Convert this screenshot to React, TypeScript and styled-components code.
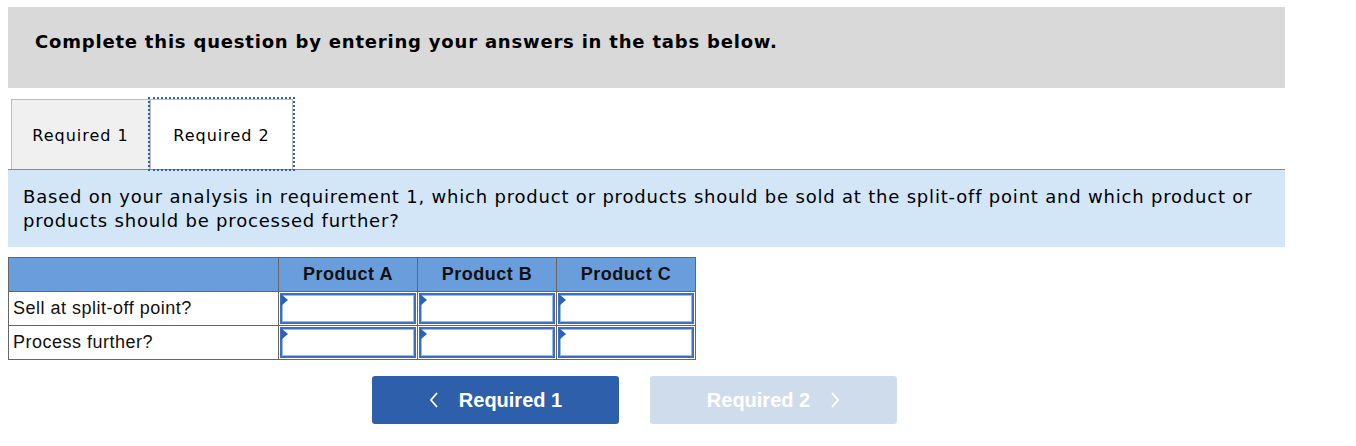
import React from 'react';
import styled, { createGlobalStyle } from 'styled-components';

const GlobalStyle = createGlobalStyle`
	html, body {
		margin: 0;
		padding: 0;
		background: #fff;
	}
	body {
		font-family: "DejaVu Sans", Verdana, sans-serif;
		color: #000;
	}
`;

const Page = styled.div`
	width: 1277px;
	padding: 7px 0 0 8px;
`;

const Instructions = styled.div`
	background: #d9d9d9;
	height: 81px;
	padding: 24px 0 0 27px;
	box-sizing: border-box;
	font-weight: bold;
	font-size: 18px;
	letter-spacing: 0.8px;
`;

const TabBar = styled.div`
	display: flex;
	margin-top: 11px;
	padding-left: 3px;
	border-bottom: 1px solid #8a8a8a;
	height: 70px;
`;

const Tab = styled.div<{ $active?: boolean }>`
	display: flex;
	align-items: center;
	justify-content: center;
	box-sizing: border-box;
	height: 70px;
	font-size: 16px;
	letter-spacing: 1px;
	background: ${p => (p.$active ? '#fff' : '#f0f0f0')};
	border: 1px solid #bcbcbc;
	border-bottom: none;
	width: ${p => (p.$active ? '143px' : '139px')};
	outline: ${p => (p.$active ? '2px dotted #2f5fb0' : 'none')};
	padding-top: 1px;
`;

const Prompt = styled.div`
	background: #d3e6f7;
	height: 77px;
	box-sizing: border-box;
	padding: 15px 15px 0 15px;
	font-size: 18px;
	letter-spacing: 0.8px;
	line-height: 24px;
`;

const Grid = styled.table`
	margin-top: 10px;
	border-collapse: collapse;
	font-family: "Liberation Sans", Arial, sans-serif;
	font-size: 18px;
	letter-spacing: 0.5px;
`;

const HeadCell = styled.th<{ $w: number }>`
	width: ${p => p.$w}px;
	height: 34px;
	box-sizing: border-box;
	background: #6a9ddc;
	border: 1px solid #666;
	font-weight: bold;
	color: #111;
	padding: 0;
	text-align: center;
	vertical-align: middle;
`;

const LabelCell = styled.td`
	height: 34px;
	border: 1px solid #666;
	padding: 0 4px;
	box-sizing: border-box;
	color: #111;
`;

const EntryCell = styled.td`
	border: 1px solid #666;
	padding: 1px;
	height: 34px;
	box-sizing: border-box;
`;

const Entry = styled.div`
	position: relative;
	height: 31px;
	box-sizing: border-box;
	border: 2px solid #3d6fc0;
	box-shadow: inset 0 0 0 1px #9bbbe6;
	background: #fff;

	&::before {
		content: '';
		position: absolute;
		left: -1px;
		top: -1px;
		border-left: 7px solid #2e62b8;
		border-top: 6px solid transparent;
		border-bottom: 6px solid transparent;
	}
`;

const Nav = styled.div`
	display: flex;
	gap: 31px;
	margin: 16px 0 0 364px;
`;

const NavButton = styled.div<{ $disabled?: boolean }>`
	width: 247px;
	height: 48px;
	border-radius: 3px;
	display: flex;
	align-items: center;
	justify-content: center;
	gap: 20px;
	font-family: "Liberation Sans", Arial, sans-serif;
	font-weight: bold;
	font-size: 20px;
	color: #fff;
	background: ${p => (p.$disabled ? '#cfdcec' : '#2e5fab')};
`;

const Chevron = ({ dir }: { dir: 'left' | 'right' }) => (
	<svg width="10" height="16" viewBox="0 0 10 16" fill="none">
		<path
			d={dir === 'left' ? 'M8 1 L2 8 L8 15' : 'M2 1 L8 8 L2 15'}
			stroke="#fff"
			strokeWidth="1.8"
		/>
	</svg>
);

const products = ['Product A', 'Product B', 'Product C'];
const rows = ['Sell at split-off point?', 'Process further?'];

export default function App() {
	return (
		<Page>
			<GlobalStyle />
			<Instructions>Complete this question by entering your answers in the tabs below.</Instructions>
			<TabBar>
				<Tab>Required 1</Tab>
				<Tab $active>Required 2</Tab>
			</TabBar>
			<Prompt>
				Based on your analysis in requirement 1, which product or products should be sold at the split-off point and which product or products should be processed further?
			</Prompt>
			<Grid>
				<thead>
					<tr>
						<HeadCell $w={270} />
						{products.map(p => (
							<HeadCell key={p} $w={139}>{p}</HeadCell>
						))}
					</tr>
				</thead>
				<tbody>
					{rows.map(r => (
						<tr key={r}>
							<LabelCell>{r}</LabelCell>
							{products.map(p => (
								<EntryCell key={p}>
									<Entry />
								</EntryCell>
							))}
						</tr>
					))}
				</tbody>
			</Grid>
			<Nav>
				<NavButton>
					<Chevron dir="left" />
					Required 1
				</NavButton>
				<NavButton $disabled>
					Required 2
					<Chevron dir="right" />
				</NavButton>
			</Nav>
		</Page>
	);
}
